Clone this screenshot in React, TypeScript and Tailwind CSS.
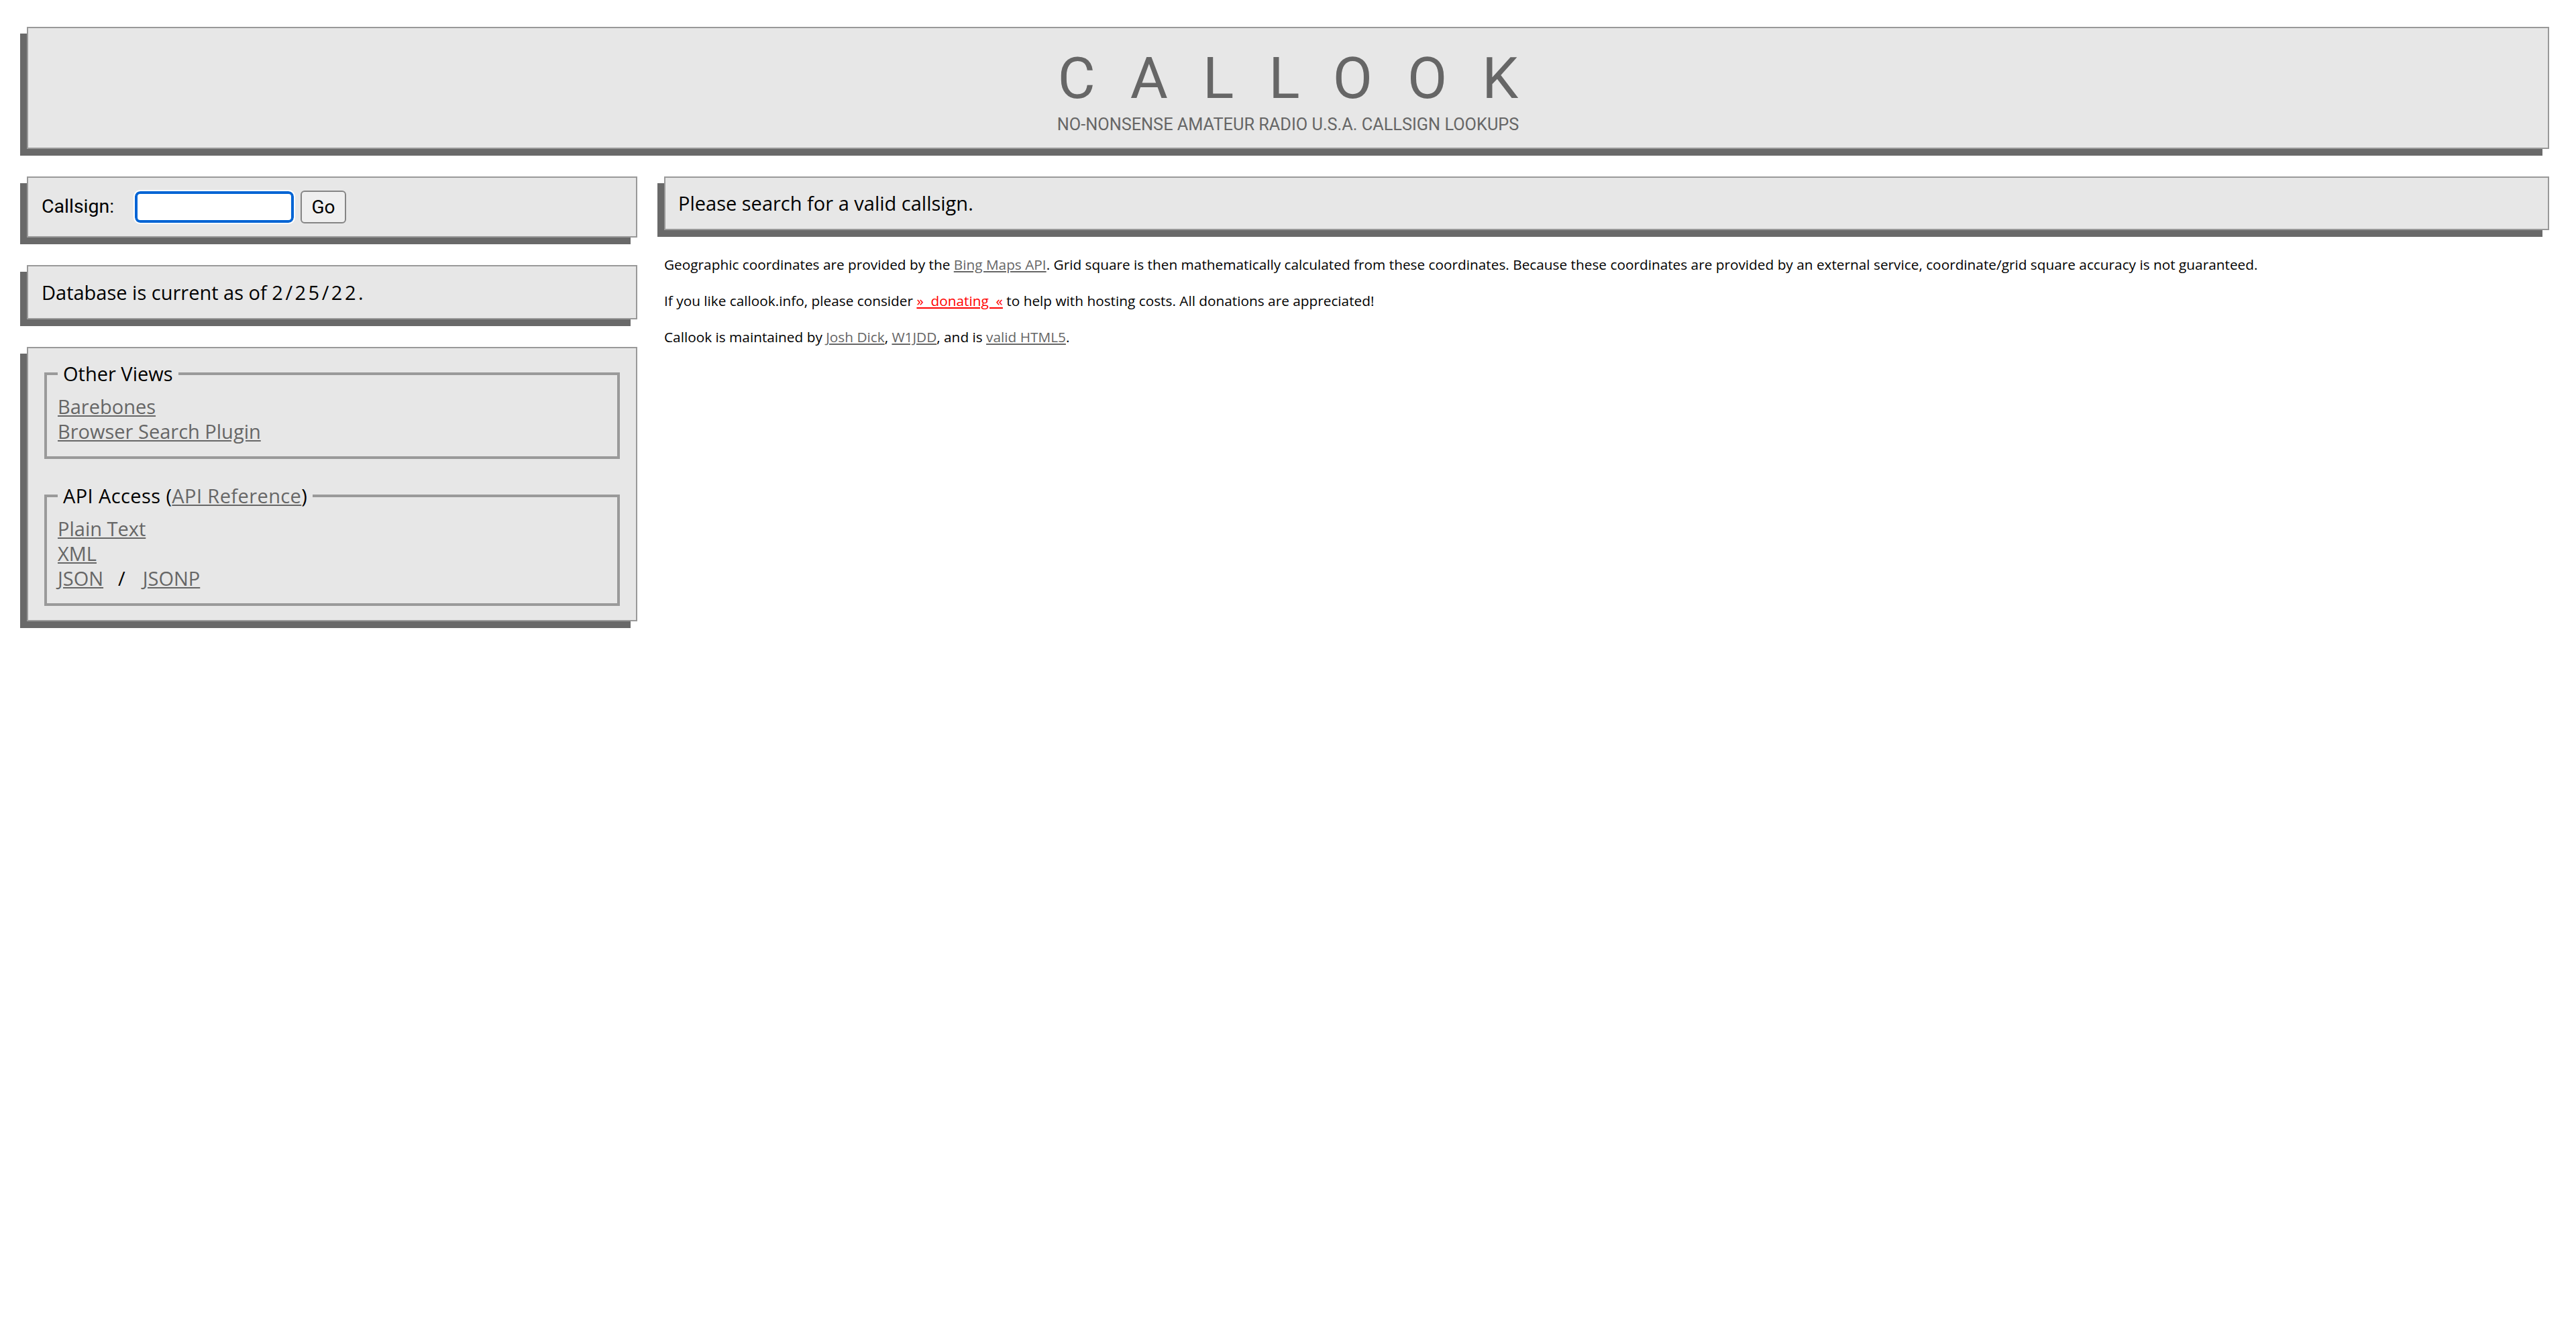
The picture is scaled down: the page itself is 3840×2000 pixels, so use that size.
const panel =
  "border-2 border-[#999] bg-[#e7e7e7] shadow-[-10px_10px_0_#696969]";

function Link({ children }: { children: React.ReactNode }) {
  return (
    <a href="#" className="text-[#666] underline">
      {children}
    </a>
  );
}

function Header() {
  return (
    <header
      className={`${panel} pt-[32px] pb-[22px] text-center font-['Roboto',sans-serif] text-[#666]`}
    >
      <h1 className="pl-[52px] text-[86px] leading-[86px] tracking-[52px]">CALLOOK</h1>
      <p className="mt-[13px] text-[25.3px] leading-[25px]">
        NO-NONSENSE AMATEUR RADIO U.S.A. CALLSIGN LOOKUPS
      </p>
    </header>
  );
}

function SearchBox() {
  return (
    <form className={`${panel} flex h-[91px] items-center pl-[20px]`}>
      <label className="w-[137px] font-['Roboto',sans-serif] text-[28.5px]">Callsign:</label>
      <input
        type="text"
        className="ml-[2px] h-[47px] w-[237px] rounded-[8px] border-4 border-[#0064d4] bg-white outline-2 outline-white"
      />
      <button
        type="button"
        className="ml-[10px] h-[49px] w-[68px] rounded-[6px] border-2 border-[#858585] bg-[#efefef] font-['Roboto',sans-serif] text-[28px] leading-none text-black"
      >
        Go
      </button>
    </form>
  );
}

function Views() {
  return (
    <div className={`${panel} px-[24px] pt-[18px] pb-[21px]`}>
      <fieldset className="border-4 border-[#9a9a9a] px-[16px] pt-[10px] pb-[19px]">
        <legend className="px-[8px] leading-[40px]">Other Views</legend>
        <div className="flex flex-col items-start leading-[37px]">
          <Link>Barebones</Link>
          <Link>Browser Search Plugin</Link>
        </div>
      </fieldset>

      <fieldset className="mt-[35px] border-4 border-[#9a9a9a] px-[16px] pt-[10px] pb-[19px]">
        <legend className="px-[8px] leading-[40px] tracking-[0.4px]">
          API Access (<Link>API Reference</Link>)
        </legend>
        <div className="flex flex-col items-start leading-[37px]">
          <Link>Plain Text</Link>
          <Link>XML</Link>
          <div>
            <Link>JSON</Link>
            <span className="ml-[22px] mr-[26px]">/</span>
            <Link>JSONP</Link>
          </div>
        </div>
      </fieldset>
    </div>
  );
}

export default function App() {
  return (
    <div className="min-h-screen bg-white p-[40px] font-['Open_Sans',sans-serif] text-[29px] text-black">
      <Header />

      <div className="mt-[41px] flex items-start gap-[40px]">
        <aside className="flex w-[910px] shrink-0 flex-col gap-[41px]">
          <SearchBox />
          <div className={`${panel} py-[18px] pl-[20px] leading-[41px]`}>
            Database is current as of <span className="tracking-[3.5px]">2/25/22.</span>
          </div>
          <Views />
        </aside>

        <main className="min-w-0 flex-1">
          <div className={`${panel} py-[18px] pl-[19px] leading-[40px]`}>
            Please search for a valid callsign.
          </div>

          <div className="mt-[38px] flex flex-col gap-[27px] text-[20.8px] leading-[27px]">
            <p>
              Geographic coordinates are provided by the <Link>Bing Maps API</Link>. Grid square is
              then mathematically calculated from these coordinates. Because these coordinates are
              provided by an external service, coordinate/grid square accuracy is not guaranteed.
            </p>
            <p>
              If you like callook.info, please consider{" "}
              <a href="#" className="text-[#f00] underline">
                »&nbsp;&nbsp;donating&nbsp;&nbsp;«
              </a>{" "}
              to help with hosting costs. All donations are appreciated!
            </p>
            <p>
              Callook is maintained by <Link>Josh Dick</Link>, <Link>W1JDD</Link>, and is{" "}
              <Link>valid HTML5</Link>.
            </p>
          </div>
        </main>
      </div>
    </div>
  );
}
